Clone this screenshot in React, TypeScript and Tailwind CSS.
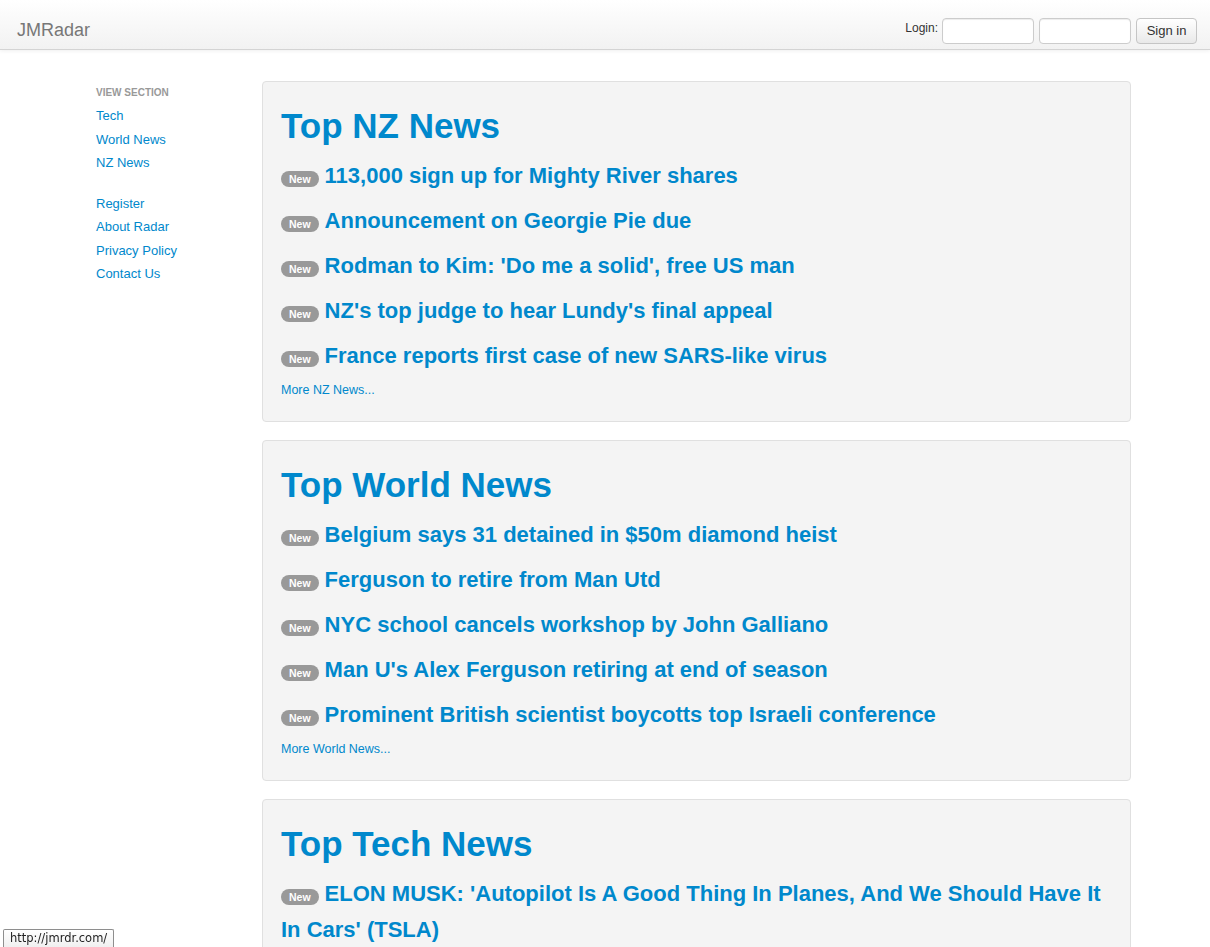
import type { ReactNode } from "react";

const FONT = "font-['Liberation_Sans',Arial,Helvetica,sans-serif]";

const SECTIONS = [
  {
    title: "Top NZ News",
    more: "More NZ News...",
    items: [
      "113,000 sign up for Mighty River shares",
      "Announcement on Georgie Pie due",
      "Rodman to Kim: 'Do me a solid', free US man",
      "NZ's top judge to hear Lundy's final appeal",
      "France reports first case of new SARS-like virus",
    ],
  },
  {
    title: "Top World News",
    more: "More World News...",
    items: [
      "Belgium says 31 detained in $50m diamond heist",
      "Ferguson to retire from Man Utd",
      "NYC school cancels workshop by John Galliano",
      "Man U's Alex Ferguson retiring at end of season",
      "Prominent British scientist boycotts top Israeli conference",
    ],
  },
  {
    title: "Top Tech News",
    more: "More Tech News...",
    items: [
      "ELON MUSK: 'Autopilot Is A Good Thing In Planes, And We Should Have It In Cars' (TSLA)",
    ],
  },
];

const SIDE_SECTIONS = ["Tech", "World News", "NZ News"];
const SIDE_LINKS = ["Register", "About Radar", "Privacy Policy", "Contact Us"];

function SideLink({ children }: { children: ReactNode }) {
  return (
    <li>
      <a href="#" className="block text-[13px] leading-[23.5px] text-[#0088cc] hover:underline">
        {children}
      </a>
    </li>
  );
}

// 헤더: 브랜드 + 로그인 폼
function Navbar() {
  return (
    <header className="flex h-[50px] items-start justify-between border-b border-[#d4d4d4] bg-gradient-to-b from-white to-[#f2f2f2] shadow-[0_1px_4px_rgba(0,0,0,0.065)]">
      <a href="#" className="ml-[17px] mt-[19px] text-[18px] leading-[22px] text-[#777]">
        JMRadar
      </a>
      <form className="mr-[13px] mt-[18px] flex items-start gap-[5px]">
        <label className="mr-[-1px] mt-[2px] text-[12px] leading-[16px] text-[#333]">Login:</label>
        <input
          type="text"
          className="h-[26px] w-[92px] rounded-[4px] border border-[#ccc] bg-white shadow-[inset_0_1px_1px_rgba(0,0,0,0.075)]"
        />
        <input
          type="password"
          className="h-[26px] w-[92px] rounded-[4px] border border-[#ccc] bg-white shadow-[inset_0_1px_1px_rgba(0,0,0,0.075)]"
        />
        <button
          type="button"
          className="h-[26px] w-[61px] rounded-[4px] border border-[#c5c5c5] bg-gradient-to-b from-white to-[#e9e9e9] text-[13px] text-[#333] shadow-[inset_0_1px_0_rgba(255,255,255,0.2)]"
        >
          Sign in
        </button>
      </form>
    </header>
  );
}

interface NewsSection {
  title: string;
  more: string;
  items: string[];
}

function HeroUnit({ section }: { section: NewsSection }) {
  return (
    <section className="rounded-[4px] border border-[#e0e0e0] bg-[#f4f4f4] px-[18px] pb-[22px] pt-[24px]">
      <h1 className="mb-[12px] text-[35px] font-bold leading-[40px] text-[#0088cc]">
        {section.title}
      </h1>
      <ul className="flex flex-col gap-[9px]">
        {section.items.map((item) => (
          <li key={item} className="text-[22px] font-bold leading-[36px]">
            <span className="mr-[6px] inline-block rounded-full bg-[#999] px-[8px] py-[2px] align-baseline text-[10.5px] font-bold leading-[12px] text-white">
              New
            </span>
            <a href="#" className="text-[#0088cc] hover:underline">
              {item}
            </a>
          </li>
        ))}
      </ul>
      <a href="#" className="mt-[7px] block text-[12.5px] leading-[18px] text-[#0088cc] hover:underline">
        {section.more}
      </a>
    </section>
  );
}

export default function App() {
  return (
    <div className={`${FONT} min-h-screen bg-white text-[#333]`}>
      <Navbar />

      <div className="flex pl-[96px] pt-[31px]">
        {/* 사이드 메뉴 */}
        <aside className="w-[166px] shrink-0 pt-[1px]">
          <div className="pt-[1px] text-[10px] font-bold uppercase leading-[20px] text-[#999]">
            View Section
          </div>
          <ul className="mt-[1px]">
            {SIDE_SECTIONS.map((s) => (
              <SideLink key={s}>{s}</SideLink>
            ))}
          </ul>
          <ul className="mt-[17px]">
            {SIDE_LINKS.map((s) => (
              <SideLink key={s}>{s}</SideLink>
            ))}
          </ul>
        </aside>

        {/* 뉴스 목록 */}
        <main className="flex w-[869px] flex-col gap-[18px] pb-[20px]">
          {SECTIONS.map((section) => (
            <HeroUnit key={section.title} section={section} />
          ))}
        </main>
      </div>

      {/* 브라우저 상태 표시줄 */}
      <div className="fixed bottom-0 left-[3px] rounded-t-[2px] border border-b-0 border-[#8e8e8e] bg-gradient-to-b from-white to-[#f0f0f0] px-[6px] font-['DejaVu_Sans',sans-serif] text-[11.5px] leading-[17px] text-[#222]">
        http://jmrdr.com/
      </div>
    </div>
  );
}
